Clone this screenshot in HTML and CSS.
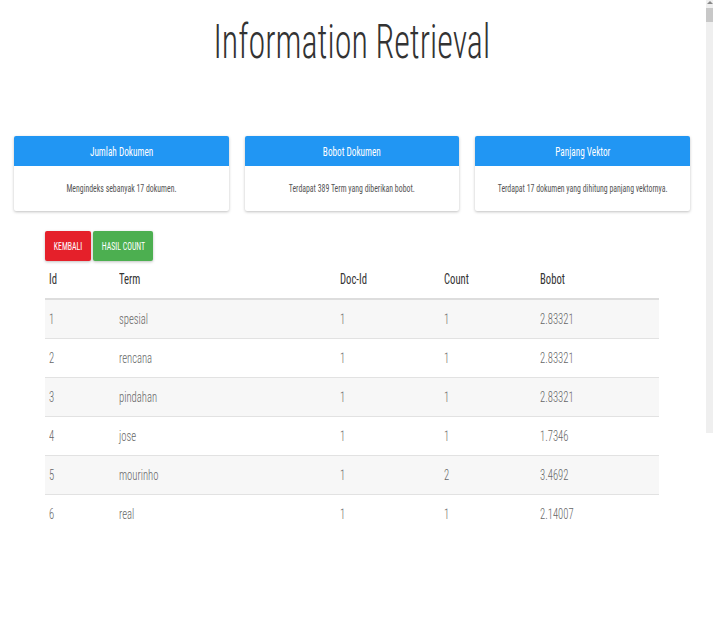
FILE: index.html
```html
<!DOCTYPE html>
<html>
<head>
<meta charset="utf-8">
<link rel="stylesheet" href="styles.css">
</head>
<body>
<div class="page">
  <h1 class="title"><span class="sx">Information Retrieval</span></h1>
  <div class="cards">
    <div class="card">
      <div class="card-head"><span class="sx">Jumlah Dokumen</span></div>
      <div class="card-body"><span class="sx">Mengindeks sebanyak 17 dokumen.</span></div>
    </div>
    <div class="card">
      <div class="card-head"><span class="sx">Bobot Dokumen</span></div>
      <div class="card-body"><span class="sx">Terdapat 389 Term yang diberikan bobot.</span></div>
    </div>
    <div class="card">
      <div class="card-head"><span class="sx">Panjang Vektor</span></div>
      <div class="card-body"><span class="sx">Terdapat 17 dokumen yang dihitung panjang vektornya.</span></div>
    </div>
  </div>
  <div class="content">
    <div class="buttons">
      <a class="btn btn-red"><span class="sx">KEMBALI</span></a>
      <a class="btn btn-green"><span class="sx">HASIL COUNT</span></a>
    </div>
    <table class="tbl">
      <colgroup>
        <col class="c-id"><col class="c-term"><col class="c-doc"><col class="c-count"><col class="c-bobot">
      </colgroup>
      <thead>
        <tr><th><span class="sx sl">Id</span></th><th><span class="sx sl">Term</span></th><th><span class="sx sl">Doc-Id</span></th><th><span class="sx sl">Count</span></th><th><span class="sx sl">Bobot</span></th></tr>
      </thead>
      <tbody>
        <tr><td><span class="sx sl">1</span></td><td><span class="sx sl">spesial</span></td><td><span class="sx sl">1</span></td><td><span class="sx sl">1</span></td><td><span class="sx sl">2.83321</span></td></tr>
        <tr><td><span class="sx sl">2</span></td><td><span class="sx sl">rencana</span></td><td><span class="sx sl">1</span></td><td><span class="sx sl">1</span></td><td><span class="sx sl">2.83321</span></td></tr>
        <tr><td><span class="sx sl">3</span></td><td><span class="sx sl">pindahan</span></td><td><span class="sx sl">1</span></td><td><span class="sx sl">1</span></td><td><span class="sx sl">2.83321</span></td></tr>
        <tr><td><span class="sx sl">4</span></td><td><span class="sx sl">jose</span></td><td><span class="sx sl">1</span></td><td><span class="sx sl">1</span></td><td><span class="sx sl">1.7346</span></td></tr>
        <tr><td><span class="sx sl">5</span></td><td><span class="sx sl">mourinho</span></td><td><span class="sx sl">1</span></td><td><span class="sx sl">2</span></td><td><span class="sx sl">3.4692</span></td></tr>
        <tr><td><span class="sx sl">6</span></td><td><span class="sx sl">real</span></td><td><span class="sx sl">1</span></td><td><span class="sx sl">1</span></td><td><span class="sx sl">2.14007</span></td></tr>
      </tbody>
    </table>
  </div>
</div>
<div class="scrollbar"><div class="sb-arrow"></div><div class="sb-thumb"></div></div>
</body>
</html>
```
FILE: styles.css
```css
html, body {
  margin: 0;
  padding: 0;
  background: #fff;
}
body {
  font-family: Roboto, "Liberation Sans", sans-serif;
  font-stretch: 75%;
  color: #333;
  width: 716px;
  height: 640px;
  position: relative;
  overflow: hidden;
}
/* the reference text is horizontally compressed */
.sx {
  display: inline-block;
  white-space: nowrap;
  transform: scaleX(0.71);
  transform-origin: 50% 50%;
}
.sl {
  transform-origin: 0 50%;
}
.page {
  width: 704px;
  padding: 0 14px;
  box-sizing: border-box;
}
.title {
  margin: 0;
  padding-top: 14px;
  height: 136px;
  box-sizing: border-box;
  display: flex;
  justify-content: center;
  align-items: flex-start;
  font-size: 48px;
  font-weight: 300;
  line-height: 56px;
  color: #333;
}
.cards {
  display: grid;
  grid-template-columns: repeat(3, 1fr);
  column-gap: 16px;
}
.card {
  background: #fff;
  border-radius: 2px;
  box-shadow: 0 1px 3px rgba(0,0,0,0.25);
  overflow: hidden;
}
.card-head {
  background: #2196f3;
  color: #fff;
  height: 30px;
  display: flex;
  justify-content: center;
  align-items: center;
  font-size: 13px;
}
.card-body {
  height: 45px;
  display: flex;
  justify-content: center;
  align-items: center;
  font-size: 11px;
  color: #555;
}
.content {
  padding: 20px 0 0 31px;
}
.buttons {
  display: flex;
  gap: 2px;
}
.btn {
  height: 30px;
  display: flex;
  justify-content: center;
  align-items: center;
  font-size: 11px;
  color: #fff;
  border-radius: 2px;
  box-shadow: 0 1px 3px rgba(0,0,0,0.25);
}
.btn-red {
  width: 46px;
  background: #e5202a;
}
.btn-green {
  width: 60px;
  background: #4caf50;
}
.tbl {
  width: 614px;
  border-collapse: collapse;
  table-layout: fixed;
  font-size: 15px;
}
.c-id { width: 70px; }
.c-term { width: 221px; }
.c-doc { width: 104px; }
.c-count { width: 96px; }
.c-bobot { width: 123px; }
.tbl th {
  text-align: left;
  font-weight: 400;
  color: #333;
  height: 35px;
  padding: 0 4px 2px;
  border-bottom: 2px solid #ddd;
}
.tbl td {
  height: 38px;
  padding: 0 4px;
  color: #666;
  font-weight: 300;
  border-bottom: 1px solid #e2e2e2;
}
.tbl tbody tr:nth-child(odd) {
  background: #f7f7f7;
}
.tbl tbody tr:last-child td {
  border-bottom: none;
}
.scrollbar {
  position: absolute;
  left: 706px;
  top: 0;
  width: 7px;
  height: 433px;
  background: #efefef;
}
.sb-arrow {
  margin: 1px auto 0;
  width: 0;
  height: 0;
  border-left: 3px solid transparent;
  border-right: 3px solid transparent;
  border-bottom: 3px solid #888;
}
.sb-thumb {
  margin-top: 4px;
  height: 14px;
  background: #c8c8c8;
}
```
